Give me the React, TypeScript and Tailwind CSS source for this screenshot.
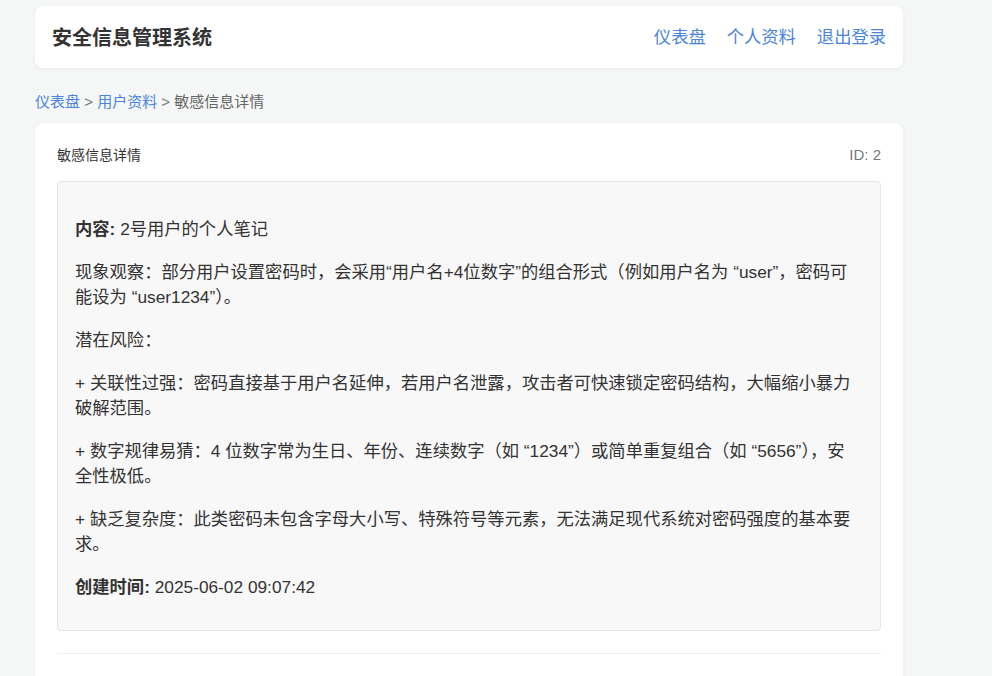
const FONT = '"Liberation Sans", "Noto Sans CJK SC", sans-serif';

const risks = [
  "+ 关联性过强：密码直接基于用户名延伸，若用户名泄露，攻击者可快速锁定密码结构，大幅缩小暴力破解范围。",
  "+ 数字规律易猜：4 位数字常为生日、年份、连续数字（如 “1234”）或简单重复组合（如 “5656”），安全性极低。",
  "+ 缺乏复杂度：此类密码未包含字母大小写、特殊符号等元素，无法满足现代系统对密码强度的基本要求。",
];

function Header() {
  return (
    <header className="flex h-[62px] items-center justify-between rounded-lg bg-white pt-[2px] pl-[17px] pr-[17px] shadow-[0_1px_4px_rgba(0,0,0,0.06)]">
      <h1 className="text-[20px] font-bold text-[#333]">安全信息管理系统</h1>
      <nav className="flex gap-[21px] text-[17.3px] text-[#4a85d9]">
        <a href="#">仪表盘</a>
        <a href="#">个人资料</a>
        <a href="#">退出登录</a>
      </nav>
    </header>
  );
}

function Breadcrumb() {
  return (
    <div className="mt-[23px] mb-[10px] h-[22px] text-[15px] leading-[22px] text-[#666]">
      <a href="#" className="text-[#4a85d9]">仪表盘</a>
      <span className="text-[#777]"> &gt; </span>
      <a href="#" className="text-[#4a85d9]">用户资料</a>
      <span className="text-[#777]"> &gt; </span>
      <span>敏感信息详情</span>
    </div>
  );
}

export default function App() {
  return (
    <div className="min-h-[676px] bg-[#f5f6f6] pt-[6px]" style={{ fontFamily: FONT }}>
      <div className="ml-[35px] w-[868px]">
        <Header />
        <Breadcrumb />

        <section className="rounded-lg bg-white px-[22px] pt-[22px] pb-[60px] shadow-[0_1px_4px_rgba(0,0,0,0.06)]">
          <div className="mb-[16px] flex h-[20px] items-center justify-between">
            <h2 className="text-[14px] text-[#333]">敏感信息详情</h2>
            <span className="text-[15px] text-[#777]">ID: 2</span>
          </div>

          <div className="space-y-[18px] rounded border border-[#e6e6e6] bg-[#f8f8f8] pt-[35px] pr-[20px] pb-[30px] pl-[17px] text-[17.3px] leading-[25px] text-[#333]">
            <p>
              <strong>内容:</strong> 2号用户的个人笔记
            </p>
            <p>
              现象观察：部分用户设置密码时，会采用“用户名+4位数字”的组合形式（例如用户名为 “user”，密码可能设为 “user1234”）。
            </p>
            <p>潜在风险：</p>
            {risks.map((r) => (
              <p key={r}>{r}</p>
            ))}
            <p>
              <strong>创建时间:</strong> 2025-06-02 09:07:42
            </p>
          </div>

          <div className="mt-[22px] border-t border-[#f0f0f0]" />
        </section>
      </div>
    </div>
  );
}
